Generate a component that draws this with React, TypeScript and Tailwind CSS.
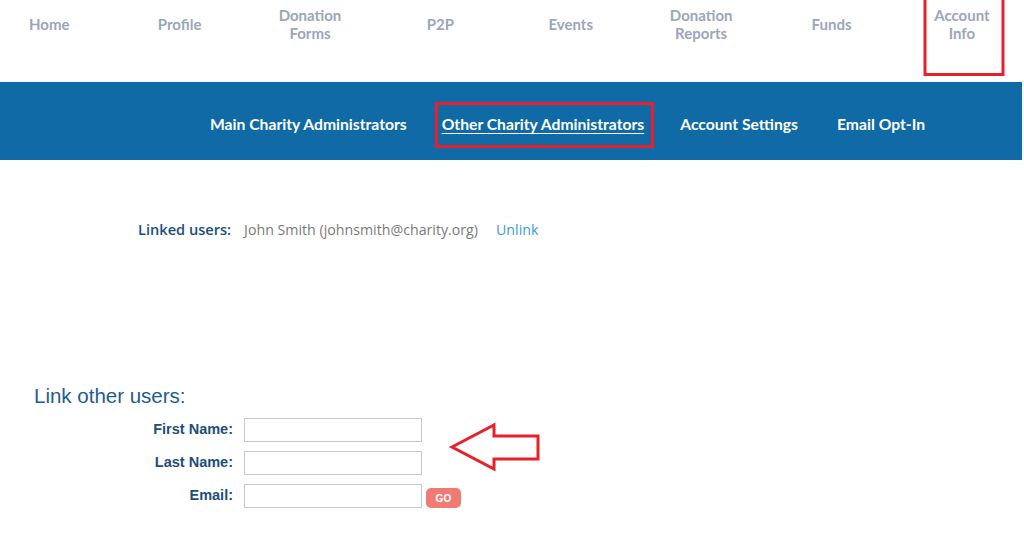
import React from 'react';

const topNav = [
  ['Home'],
  ['Profile'],
  ['Donation', 'Forms'],
  ['P2P'],
  ['Events'],
  ['Donation', 'Reports'],
  ['Funds'],
  ['Account', 'Info'],
];

function FormRow({ label, withButton }: { label: string; withButton?: boolean }) {
  return (
    <div className="flex items-center h-[24px] mb-[9px]">
      <label className="w-[233px] text-right text-[14.5px] font-bold text-[#1b4e7e] [font-family:'Liberation_Sans',Arial,sans-serif]">
        {label}
      </label>
      <input
        type="text"
        className="ml-[11px] w-[178px] h-[24px] border border-[#c8c8c8] bg-white outline-none"
      />
      {withButton && (
        <button
          type="button"
          className="ml-[4px] mt-[5px] w-[35px] h-[20px] rounded-[5px] bg-[#f17b74] text-white text-[10px] font-bold tracking-wide [font-family:'Liberation_Sans',Arial,sans-serif]"
        >
          GO
        </button>
      )}
    </div>
  );
}

export default function App() {
  return (
    <div className="w-[1024px] h-[533px] overflow-hidden bg-white relative [font-family:Lato,sans-serif]">
      {/* top nav */}
      <nav className="h-[82px] flex -ml-[16px]">
        {topNav.map((lines, i) => (
          <div key={i} className="w-[130.4px] shrink-0 flex justify-center">
            <div
              className={
                'relative flex flex-col items-center h-[75px] text-[15px] leading-[18px] font-bold text-[#9aa6bb] ' +
                (lines.length === 1 ? 'pt-[15px]' : 'pt-[6px]')
              }
            >
              {lines.map((l) => (
                <span key={l}>{l}</span>
              ))}
              {i === topNav.length - 1 && (
                <div className="absolute -top-[4px] h-[80px] left-1/2 -translate-x-1/2 ml-[2px] w-[81px] border-[3px] border-[#e9202b]" />
              )}
            </div>
          </div>
        ))}
      </nav>

      {/* sub nav */}
      <div className="h-[78px] w-[1022px] bg-[#0f6aa6] flex items-center pt-[8px] pl-[210px] text-white text-[15.7px] font-bold">
        <span>Main Charity Administrators</span>
        <span className="ml-[35px] underline underline-offset-[3px] relative">
          Other Charity Administrators
          <span className="absolute -left-[7px] -right-[10px] -top-[11px] -bottom-[11px] border-[3px] border-[#e9202b]" />
        </span>
        <span className="ml-[36px]">Account Settings</span>
        <span className="ml-[39px]">Email Opt-In</span>
      </div>

      {/* linked users */}
      <div className="mt-[59px] flex items-center text-[14.2px] [font-family:'Open_Sans',sans-serif]">
        <span className="ml-[138px] text-[14.6px] font-semibold text-[#1b4e7e]">Linked users:</span>
        <span className="ml-[13px] text-[#7a7a7a]">John Smith (johnsmith@charity.org)</span>
        <span className="ml-[18px] text-[#3d9ad6]">Unlink</span>
      </div>

      {/* link other users */}
      <div className="mt-[143px] ml-[34px] text-[20.5px] text-[#1d5d8e] [font-family:'Liberation_Sans',Arial,sans-serif] leading-[24px]">
        Link other users:
      </div>
      <div className="mt-[10px]">
        <FormRow label="First Name:" />
        <FormRow label="Last Name:" />
        <FormRow label="Email:" withButton />
      </div>

      <svg className="absolute left-[448px] top-[422px]" width="94" height="52" viewBox="448 422 94 52">
        <polygon
          points="452,447 494,425 494,436 538,436 538,459 494,459 494,469"
          fill="none"
          stroke="#e9202b"
          strokeWidth="3"
        />
      </svg>
    </div>
  );
}
